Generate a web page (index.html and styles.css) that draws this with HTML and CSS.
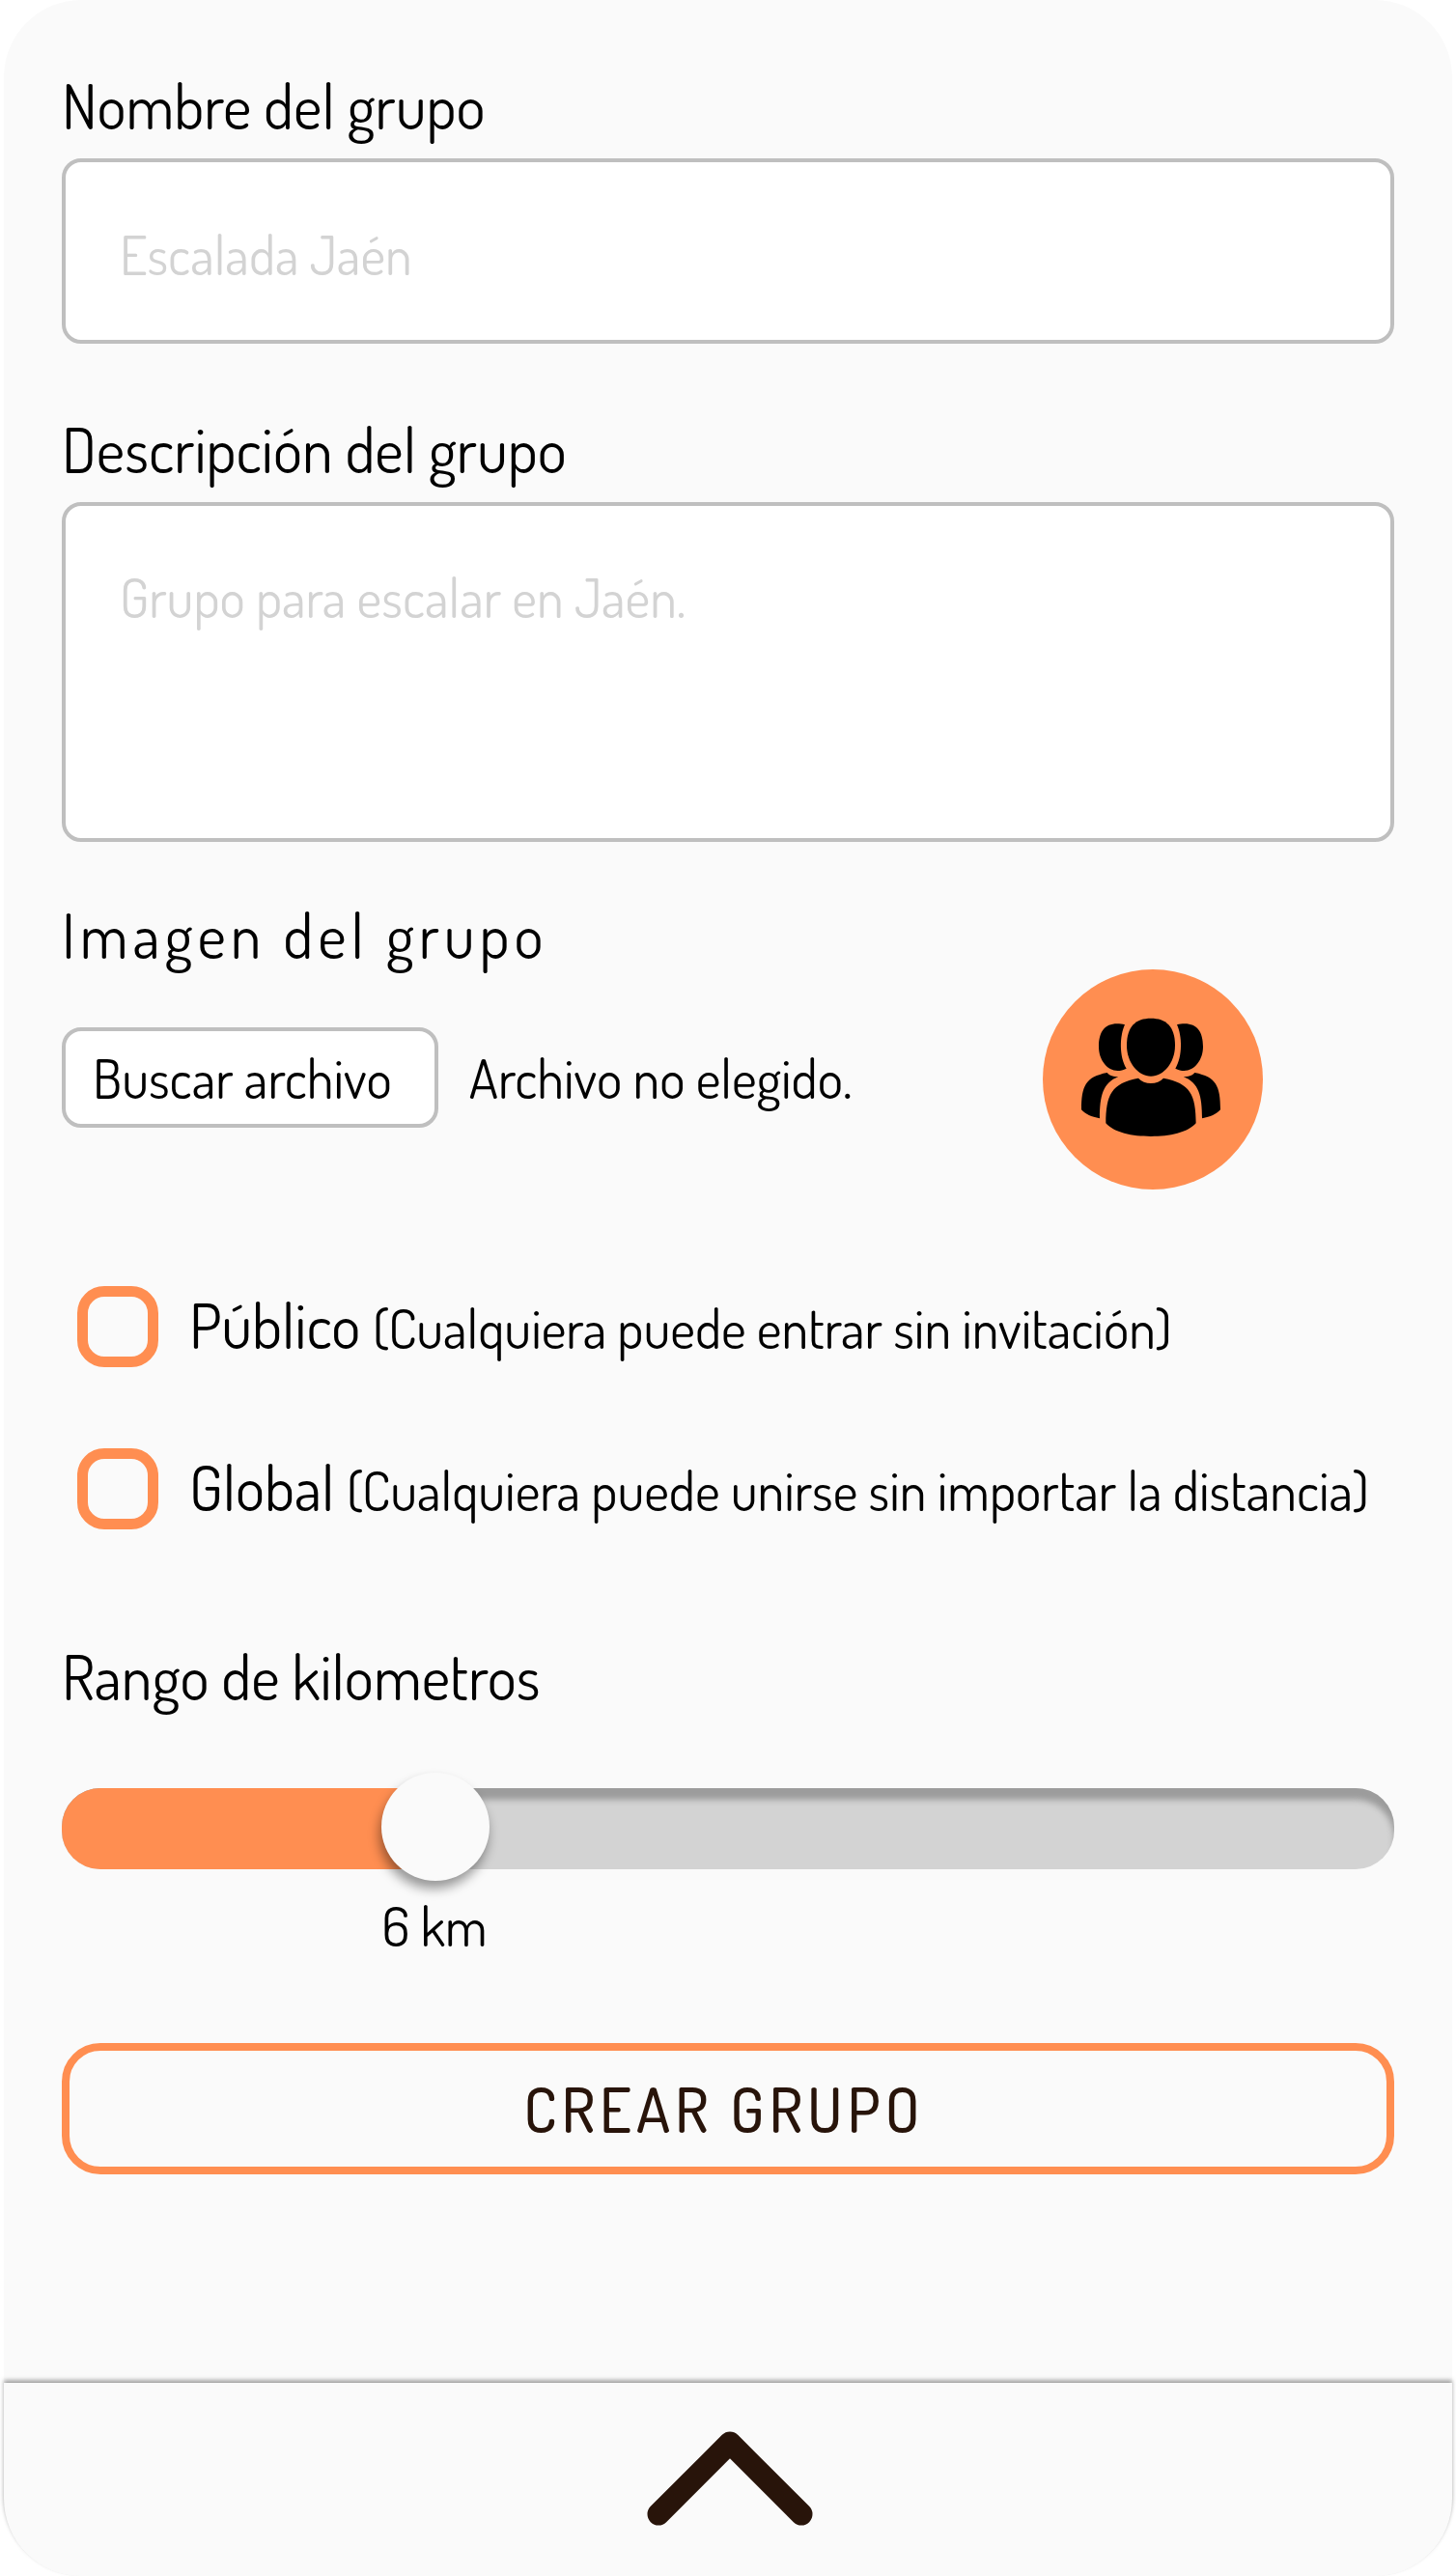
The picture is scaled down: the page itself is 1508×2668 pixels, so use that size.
FILE: index.html
```html
<!DOCTYPE html>
<html lang="es">
<head>
<meta charset="utf-8">
<meta name="viewport" content="width=device-width, initial-scale=1">
<title>Crear grupo</title>
<link rel="stylesheet" href="styles.css">
</head>
<body>
<div class="sheet">
  <form class="form">
    <div class="field">
      <label class="label" for="name">Nombre del grupo</label>
      <input class="control" id="name" type="text" placeholder="Escalada Jaén">
    </div>
    <div class="field">
      <label class="label" for="description">Descripción del grupo</label>
      <textarea class="control control-tall" id="description" placeholder="Grupo para escalar en Jaén."></textarea>
    </div>
    <div class="image-field">
      <div class="image-picker">
        <span class="label label-spaced" id="image-label">Imagen del grupo</span>
        <div class="file-row">
          <button class="file-button" type="button" aria-describedby="image-label">Buscar archivo</button>
          <span class="small-text">Archivo no elegido.</span>
        </div>
      </div>
      <div class="avatar">
        <svg class="avatar-icon" viewBox="60 72 684 684" aria-hidden="true">
          <path d="M396 224c46 0 75 24 75 84 0 54-36 96-75 96s-75-42-75-96c0-60 29-84 75-84z"/>
          <path d="M315 244c-16 34-18 99 5 136-10 5-18 7-27 7-33 0-59-34-59-75 0-45 18-71 57-71 9 0 16 1 24 3z"/>
          <path d="M477 244c16 34 18 99-5 136 10 5 18 7 27 7 33 0 59-34 59-75 0-45-18-71-57-71-9 0-16 1-24 3z"/>
          <path d="M357 410c18 21 60 21 78 0 83 15 101 52 101 140-25 29-82 41-140 41s-115-12-140-41c0-88 18-125 101-140z"/>
          <path d="M260 393c7 9 21 13 35 13-48 18-58 59-58 129-27-5-43-13-57-27 0-74 13-102 80-115z"/>
          <path d="M532 393c-7 9-21 13-35 13 48 18 58 59 58 129 27-5 43-13 57-27 0-74-13-102-80-115z"/>
        </svg>
      </div>
    </div>
    <div class="options">
      <label class="option">
        <input class="checkbox" type="checkbox">
        <span>Público <span class="small-text">(Cualquiera puede entrar sin invitación)</span></span>
      </label>
      <label class="option">
        <input class="checkbox" type="checkbox">
        <span>Global <span class="small-text">(Cualquiera puede unirse sin importar la distancia)</span></span>
      </label>
    </div>
    <div class="range-field">
      <label class="label" for="range">Rango de kilometros</label>
      <div class="slider">
        <div class="slider-track"><div class="slider-fill"></div></div>
        <input class="slider-input" id="range" type="range" min="0" max="23" value="6">
      </div>
      <output class="range-value small-text" for="range">6 km</output>
    </div>
    <button class="submit" type="submit">CREAR GRUPO</button>
  </form>
  <footer class="bottom-bar">
    <button class="expand" type="button" aria-label="Abrir menú">
      <svg class="chevron" viewBox="-4 0 176 100" aria-hidden="true"><path d="M12 86L86 12l74 74"/></svg>
    </button>
  </footer>
</div>
</body>
</html>
```
FILE: styles.css
```css
* {
  box-sizing: border-box;
}

body {
  margin: 0;
  padding: 0 4px;
  background: #fff;
  color: #000;
  font-family: Dosis, Lato, sans-serif;
  font-size: 64px;
  line-height: 80px;
}

button,
input,
textarea {
  margin: 0;
  font: inherit;
  color: inherit;
}

.sheet {
  display: flex;
  flex-direction: column;
  min-height: 100vh;
  border-radius: 80px;
  background: #fafafa;
}

.form {
  display: flex;
  flex-direction: column;
  padding: 69px 60px;
}

.field {
  display: flex;
  flex-direction: column;
  gap: 15px;
  margin-bottom: 69px;
}

.field + .image-field {
  margin-top: -13px;
}

.label-spaced {
  letter-spacing: 5px;
}

.small-text,
.control,
.file-button {
  font-size: 56px;
}

.control {
  display: block;
  width: 100%;
  height: 192px;
  padding: 4px 56px 0;
  border: 4px solid #bfbfbf;
  border-radius: 20px;
  background: #fff;
}

.control::placeholder {
  color: #d3d3d3;
  opacity: 1;
}

.control-tall {
  height: 352px;
  padding-top: 54px;
  resize: none;
}

.image-field {
  display: flex;
  align-items: flex-end;
  justify-content: space-between;
  padding-right: 136px;
}

.image-picker {
  display: flex;
  flex-direction: column;
  gap: 56px;
  padding-bottom: 64px;
}

.file-row {
  display: flex;
  align-items: center;
  gap: 32px;
}

.file-button {
  height: 104px;
  padding: 0 44px 0 28px;
  border: 4px solid #bfbfbf;
  border-radius: 20px;
  background: #fff;
}

.avatar {
  width: 228px;
  height: 228px;
  border-radius: 50%;
  background: #ff8e51;
}

.avatar-icon {
  display: block;
  width: 100%;
  height: 100%;
}

.options {
  display: flex;
  flex-direction: column;
  gap: 84px;
  margin-top: 100px;
  padding-left: 16px;
}

.option {
  display: flex;
  align-items: flex-start;
  gap: 32px;
  height: 84px;
}

.checkbox {
  flex: none;
  width: 84px;
  height: 84px;
  border: 11px solid #ff8e51;
  border-radius: 28px;
  appearance: none;
}

.checkbox:checked {
  background: #ff8e51;
}

.range-field {
  display: flex;
  flex-direction: column;
  margin-top: 112px;
}

.slider {
  display: grid;
  align-items: center;
  margin-top: 60px;
}

.slider-track,
.slider-input {
  grid-area: 1 / 1;
}

.slider-track {
  height: 84px;
  margin-top: 4px;
  border-radius: 40px;
  background: #d3d3d3;
  box-shadow: inset 0 12px 6px #9c9c9c;
  overflow: hidden;
}

.slider-fill {
  width: 28%;
  height: 100%;
  background: #ff8e51;
}

.slider-input {
  width: 100%;
  height: 112px;
  background: none;
  appearance: none;
}

.slider-input::-webkit-slider-thumb {
  width: 112px;
  height: 112px;
  border-radius: 50%;
  background: #fafafa;
  box-shadow: -2px 8px 12px rgba(0, 0, 0, 0.4);
  appearance: none;
}

.range-value {
  margin-top: 6px;
  padding-left: 24%;
}

.submit {
  height: 136px;
  margin-top: 82px;
  padding: 0 8px 0 0;
  border: 8px solid #ff8e51;
  border-radius: 40px;
  background: none;
  color: #28140a;
  font-weight: 500;
  letter-spacing: 5px;
}

.bottom-bar {
  display: flex;
  height: 200px;
  margin-top: auto;
  border-radius: 0 0 80px 80px;
  background: #fafafa;
  box-shadow: 0 -3px 4px rgba(0, 0, 0, 0.35);
}

.expand {
  flex: 1;
  padding: 0;
  border: 0;
  background: none;
}

.chevron {
  display: block;
  width: 176px;
  height: 100px;
  margin: 0 auto;
  fill: none;
  stroke: #28140a;
  stroke-width: 23;
  stroke-linecap: round;
  stroke-linejoin: round;
}
```
